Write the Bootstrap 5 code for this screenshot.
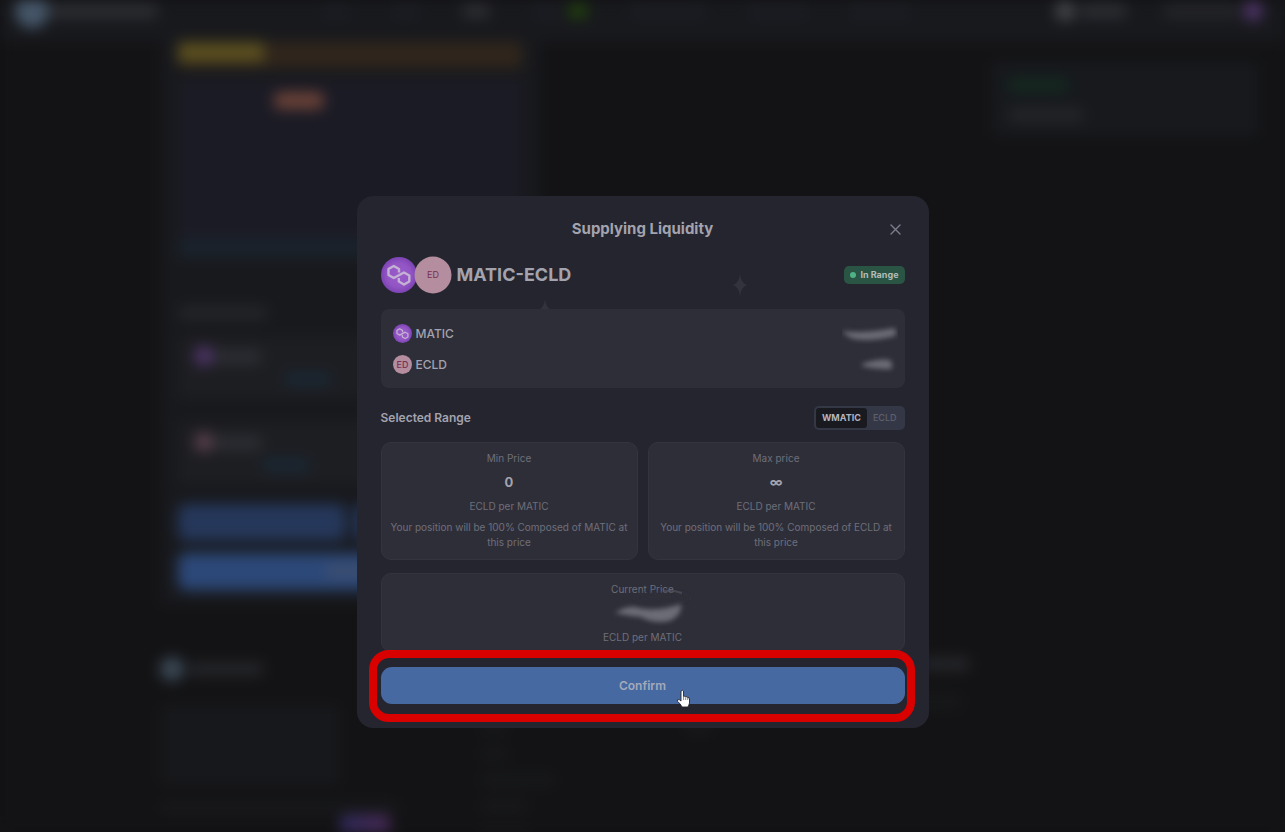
<!DOCTYPE html>
<html lang="en" data-bs-theme="dark">
<head>
<meta charset="utf-8">
<meta name="viewport" content="width=device-width, initial-scale=1">
<title>Supplying Liquidity</title>
<link href="https://cdn.jsdelivr.net/npm/bootstrap@5.3.0/dist/css/bootstrap.min.css" rel="stylesheet">
<style>
html, body { background: #131315; overflow: hidden; }
body { font-family: Inter, "Liberation Sans", sans-serif; font-size: 12px; color: #a3a3ae; height: 100vh; }

/* Blurred page behind the dialog */
.backpage { filter: blur(7px); height: 100vh; overflow: hidden; background: #131315; }
.topbar { height: 42px; background: #18191d; padding: 1px 22px 0 50px; position: relative; }
.topbar-menu { margin-left: 164px; gap: 42px; }
.topbar .bar { margin-top: 3px; }
.bar { display: block; height: 14px; width: 60px; border-radius: 6px; background: #1c1d24; flex: none; }
.bar-xs { width: 28px; } .bar-s { width: 48px; } .bar-m { width: 76px; } .bar-h { width: 90px; } .bar-l { width: 108px; }
.bar-lit { background: #2d2e33; }
.bar-soft { background: #242529; }
.bar-faint { background: #17181b; }
.bar-green { background: #14291f; }
.bar-lime { background: #21420c; width: 20px; }
.bar-blue { background: #1a2733; }
.bar-first { margin: 6px 0 0 90px; } .bar-second { margin: 6px 0 0 68px; }
.dot { display: block; width: 20px; height: 20px; border-radius: 50%; flex: none; }
.dot-brand { width: 34px; height: 34px; background: #46576a; position: absolute; left: 15px; top: -6px; }
.dot-grey { background: #45464a; } .dot-violet { background: #4e3468; } .dot-rose { background: #583f4b; } .dot-steel { width: 24px; height: 24px; background: #3b4855; }
.panel { width: 380px; margin-left: 160px; height: 563px; padding: 0 18px; background: #18191d; }
.alertbar { height: 26px; background: #30261c; }
.alertbar-tag { height: 20px; width: 86px; background: #5a4e1e; }
.chart { height: 158px; background: #1b1b25; margin-top: 12px; padding: 12px 0 0 96px; }
.chart-tag { width: 50px; height: 17px; background: #6b4238; border-radius: 6px; }
.rangebar { height: 20px; background: #1a222b; }
.deposit { height: 62px; background: #1d1e22; padding: 10px 16px; }
.act { height: 37px; border-radius: 8px; background: #25375a; }
.acts { margin: 20px 0 12px; }
.act-main { background: #2c4878; padding-top: 11px; }
.act-main .bar { background: #3d4e70; }
.toastcard { width: 266px; height: 74px; margin: 20px 27px 0 0; padding: 16px; background: #17191d; }
.foot { padding: 52px 160px 0; }
.foot-brand { width: 320px; }
.foot-col { width: 205px; }
.foot-links { gap: 12px; }
.bar-text { width: 180px; height: 80px; }
.bar-glow { width: 50px; height: 20px; margin-left: 180px; background: linear-gradient(90deg, #2f2a5c, #4b2a58); }

/* Dialog */
.supply { width: 572px; max-width: calc(100% - 24px); margin: 196px auto 0; }
.supply .modal-content { background: #25252f; border: 0; border-radius: 16px; padding: 20px 24px 24px; color: inherit; }
.supply-title { font-size: 15px; line-height: 26px; font-weight: 700; color: #a3a3ae; }
.close-x { right: 0; top: 0; width: 20px; height: 26px; color: #7b7d8a; }
.pair { margin-top: 10px; height: 38px; margin: 14px 0 15px; }
.pair-name { font-size: 18px; line-height: 28px; font-weight: 700; margin-left: 5px; }
.coin { display: block; flex: none; }
.range-badge { background: #2a5443; color: #b3bdb9; font-size: 9px; line-height: 14px; font-weight: 700; border-radius: 5px; padding: 2px 6px; }
.range-badge i { width: 6px; height: 6px; border-radius: 50%; background: #4fb286; }
.tile { background: #2e2e39; border-radius: 8px; }
.amounts { padding: 9px 7px 9px 12px; height: 79px; font-weight: 500; }
.amounts-row { height: 31px; }
.tile-outline { border: 1px solid #343440; border-radius: 10px; }
.range-head { margin: 18px 0 12px; height: 24px; font-weight: 600; }
.flip { background: #343846; border-radius: 5px; padding: 2px; height: 24px; }
.flip button { border: 0; background: none; color: #5f606d; font-size: 9px; line-height: 20px; font-weight: 500; padding: 0 6px; border-radius: 3px; }
.flip button.on { background: #191a20; color: #b4b4be; font-weight: 700; }
.cards { gap: 10px; }
.price { font-size: 10px; line-height: 15px; color: #6e6e7a; text-align: center; padding: 8px 8px 9px; }
.price-value { font-size: 13px; line-height: 18px; font-weight: 700; color: #a3a3ae; margin: 7px 0 8px; }
.price-note { margin-top: 6px; }
.price-now { height: 79px; margin-top: 13px; }
.confirm-wrap { margin-top: 15px; }
.confirm { width: 100%; height: 37px; border: 0; border-radius: 11px; background: #4669a2; color: #a3a9bb; font-weight: 600; }
.marker { inset: -17px -10px -18px -12px; border: 8px solid #d90000; border-radius: 20px; pointer-events: none; }
.pointer { left: calc(50% + 33px); top: 22px; }
.spark-a { left: 375px; top: 76px; }
.spark-b { left: 179px; top: 103px; }
.smear-now { left: calc(50% - 36px); top: 8px; }
</style>
</head>
<body>
<svg width="0" height="0" class="position-absolute" aria-hidden="true">
  <defs>
    <radialGradient id="violet"><stop offset="0" stop-color="#9a5cc8"/><stop offset=".65" stop-color="#9355c4"/><stop offset="1" stop-color="#7d44b4"/></radialGradient>
    <filter id="soft" x="-30%" y="-60%" width="160%" height="220%"><feGaussianBlur stdDeviation="2.500"/></filter>
    <symbol id="matic" viewBox="0 0 36 36">
      <circle cx="18" cy="18" r="18" fill="url(#violet)"/>
      <path d="M18 15.500V12L12.800 9 7.500 12v6l5.300 3 10.200-5.500 5.300 3v6L23 27.500l-5.200-3V21" fill="none" stroke="#c3b2d4" stroke-width="2.4" stroke-linejoin="round"/>
    </symbol>
    <symbol id="spark" viewBox="0 0 18 26"><path d="M9 0Q10 11 17 13 10 15 9 26 8 15 1 13 8 11 9 0Z" fill="#33333e"/></symbol>
  </defs>
</svg>

<div class="backpage" aria-hidden="true">
  <div class="topbar d-flex align-items-start">
    <span class="dot dot-brand"></span>
    <span class="bar bar-l bar-lit"></span>
    <div class="topbar-menu d-flex">
      <span class="bar bar-xs"></span><span class="bar bar-xs"></span><span class="bar bar-xs bar-lit"></span>
      <div class="d-flex gap-2"><span class="bar bar-xs"></span><span class="bar bar-lime"></span></div>
      <span class="bar bar-m"></span><span class="bar"></span><span class="bar"></span>
    </div>
    <div class="d-flex ms-auto gap-1">
      <span class="dot dot-grey"></span><span class="bar bar-s bar-lit me-4"></span><span class="bar bar-m bar-soft ms-2"></span><span class="dot dot-violet"></span>
    </div>
  </div>
  <div class="d-flex justify-content-between align-items-start">
    <div class="panel">
      <div class="alertbar"><div class="alertbar-tag"></div></div>
      <div class="chart"><div class="chart-tag"></div></div>
      <div class="rangebar"></div>
      <span class="bar bar-h bar-soft mt-5"></span>
      <div class="deposit mt-3">
        <div class="d-flex"><span class="dot dot-violet"></span><span class="bar bar-s bar-lit mt-1"></span></div>
        <span class="bar bar-s bar-blue bar-first"></span>
      </div>
      <div class="deposit mt-4">
        <div class="d-flex"><span class="dot dot-rose"></span><span class="bar bar-s bar-lit mt-1"></span></div>
        <span class="bar bar-s bar-blue bar-second"></span>
      </div>
      <div class="acts d-flex gap-2"><div class="act flex-fill"></div><div class="act flex-fill"></div></div>
      <div class="act act-main d-flex justify-content-center"><span class="bar bar-s"></span></div>
    </div>
    <div class="toastcard">
      <span class="bar bar-green"></span><span class="bar bar-m bar-soft mt-3"></span>
    </div>
  </div>
  <div class="foot d-flex">
    <div class="foot-brand">
      <div class="d-flex align-items-center gap-1"><span class="dot dot-steel"></span><span class="bar bar-m bar-soft"></span></div>
      <span class="bar bar-text bar-faint mt-4"></span>
      <span class="bar w-75 bar-faint mt-3"></span>
      <span class="bar bar-glow"></span>
    </div>
    <div class="foot-col foot-links pt-5 d-grid align-content-start">
      <span class="bar bar-xs bar-faint mt-3"></span><span class="bar bar-xs bar-faint"></span><span class="bar bar-m bar-faint"></span><span class="bar bar-s bar-faint"></span><span class="bar bar-s bar-faint"></span>
    </div>
    <div class="foot-col pt-5"><span class="bar bar-xs bar-faint mt-3"></span></div>
    <div class="foot-col ps-4"><span class="bar bar-s bar-soft ms-2"></span><span class="bar bar-s bar-faint mt-4"></span></div>
  </div>
</div>

<div class="modal d-block overflow-hidden" role="dialog" aria-modal="true" aria-labelledby="dlgTitle">
  <div class="supply">
    <div class="modal-content">
      <svg class="position-absolute spark-a" width="16" height="26" aria-hidden="true"><use href="#spark"/></svg>
      <svg class="position-absolute spark-b" width="18" height="22" aria-hidden="true"><use href="#spark"/></svg>

      <div class="position-relative text-center">
        <h1 class="supply-title m-0" id="dlgTitle">Supplying Liquidity</h1>
        <button type="button" class="close-x position-absolute border-0 bg-transparent p-0 d-flex align-items-center" aria-label="Close">
          <svg width="20" height="20" viewBox="0 0 20 20" fill="none" stroke="currentColor" stroke-width="1.4" stroke-linecap="round"><path d="M6 6l9 9M15 6l-9 9"/></svg>
        </button>
      </div>

      <div class="pair d-flex align-items-center">
        <svg class="coin" width="71" height="38" viewBox="0 0 71 38" role="img" aria-label="MATIC and ECLD">
          <use href="#matic" x="0" y="1" width="36" height="36"/>
          <circle cx="52" cy="19" r="18.5" fill="#b48d9f"/>
          <text x="52" y="22" font-size="9" fill="#7a3050" text-anchor="middle">ED</text>
        </svg>
        <span class="pair-name">MATIC-ECLD</span>
        <span class="range-badge ms-auto d-flex align-items-center gap-1"><i></i>In Range</span>
      </div>

      <div class="tile amounts position-relative">
        <div class="amounts-row d-flex align-items-center gap-1">
          <svg class="coin" width="19" height="19" aria-hidden="true"><use href="#matic"/></svg>
          <span>MATIC</span>
          <svg class="ms-auto" width="56" height="20" aria-hidden="true"><path d="M0 7Q22 10 52 4Q56 8 53 12Q30 18 12 15Q5 13 0 7Z" fill="#6a6a74" filter="url(#soft)"/></svg>
        </div>
        <div class="amounts-row d-flex align-items-center gap-1">
          <svg class="coin" width="19" height="19" viewBox="0 0 19 19" aria-hidden="true"><circle cx="9.500" cy="9.500" r="9.500" fill="#b48d9f"/><text x="9.500" y="13" font-size="9" fill="#7a3050" text-anchor="middle">ED</text></svg>
          <span>ECLD</span>
          <svg class="ms-auto" width="56" height="20" aria-hidden="true"><path d="M20 9Q36 3 48 5Q52 11 49 14Q34 15 20 11Z" fill="#6a6a74" filter="url(#soft)"/></svg>
        </div>
      </div>

      <div class="range-head d-flex align-items-center justify-content-between">
        <span>Selected Range</span>
        <div class="flip d-flex" role="group" aria-label="Price unit"><button type="button" class="on" aria-pressed="true">WMATIC</button><button type="button" aria-pressed="false">ECLD</button></div>
      </div>

      <div class="row g-0 cards flex-nowrap">
        <div class="col"><div class="tile tile-outline price">
          <div>Min Price</div>
          <div class="price-value">0</div>
          <div>ECLD per MATIC</div>
          <div class="price-note">Your position will be 100% Composed of MATIC at this price</div>
        </div></div>
        <div class="col"><div class="tile tile-outline price">
          <div>Max price</div>
          <div class="price-value">∞</div>
          <div>ECLD per MATIC</div>
          <div class="price-note">Your position will be 100% Composed of ECLD at this price</div>
        </div></div>
      </div>

      <div class="tile tile-outline price price-now position-relative">
        <div>Current Price</div>
        <div class="price-value">&nbsp;</div>
        <div>ECLD per MATIC</div>
        <svg class="position-absolute smear-now" width="84" height="44" aria-hidden="true">
          <path d="M30 13Q50 9 80 13V18H30Z" fill="#2e2e39" filter="url(#soft)"/>
          <path d="M56 9Q66 8 75 11" fill="none" stroke="#5f5f6a" stroke-width="2" opacity=".5"/>
          <path d="M8 31Q22 22 32 26Q50 30 74 22Q75 34 62 39Q46 42 34 35Q22 34 8 31Z" fill="#6c6c77" filter="url(#soft)"/>
        </svg>
      </div>

      <div class="confirm-wrap position-relative">
        <button type="button" class="confirm">Confirm</button>
        <div class="marker position-absolute"></div>
        <svg class="position-absolute pointer" width="16" height="20" viewBox="0 0 16 20" aria-hidden="true"><path d="M5 2Q6.500.6 7.500 2V7.500Q9 6.500 9.600 8Q11 7.200 11.600 8.600Q13.300 8 13.500 10V14Q13 16 12 18H6Q4.500 14.500 1.300 12.200Q1 10 3.200 10.600L5 12Z" fill="#fff" stroke="#26262c" stroke-width=".9"/><path d="M7.600 8v3M9.700 8.500v2.500M11.700 9v2" stroke="#555" stroke-width=".7"/></svg>
      </div>
    </div>
  </div>
</div>
<script src="https://cdn.jsdelivr.net/npm/bootstrap@5.3.0/dist/js/bootstrap.bundle.min.js"></script>
</body>
</html>
